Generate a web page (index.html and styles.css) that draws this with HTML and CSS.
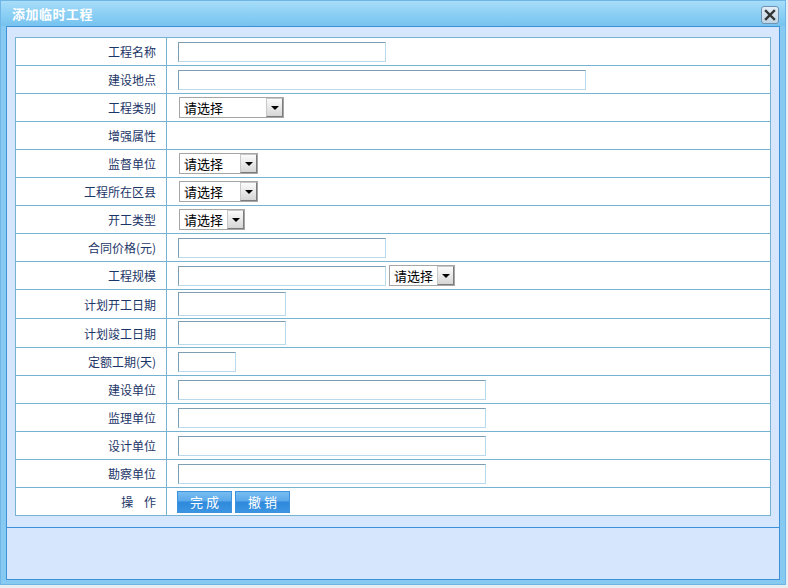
FILE: index.html
```html
<!DOCTYPE html>
<html lang="zh-CN">
<head>
  <meta charset="UTF-8">
  <title>添加临时工程</title>
  <link rel="stylesheet" href="styles.css">
</head>
<body>
  <div class="dialog">
    <div class="titlebar">
      <span class="title">添加临时工程</span>
      <a class="close" href="#" title="关闭">
        <svg width="12" height="12" viewBox="0 0 12 12"><path d="M2 2 L10 10 M10 2 L2 10" stroke="#333" stroke-width="2.4" stroke-linecap="square"/></svg>
      </a>
    </div>
    <div class="dialog-body">
      <div class="panel">
        <table class="form">
          <tr>
            <td class="label">工程名称</td>
            <td><input class="txt w208" type="text"></td>
          </tr>
          <tr>
            <td class="label">建设地点</td>
            <td><input class="txt w408" type="text"></td>
          </tr>
          <tr>
            <td class="label">工程类别</td>
            <td><span class="sel w105"><select><option>请选择</option></select><i class="arrow"></i></span></td>
          </tr>
          <tr>
            <td class="label">增强属性</td>
            <td></td>
          </tr>
          <tr>
            <td class="label">监督单位</td>
            <td><span class="sel w79"><select><option>请选择</option></select><i class="arrow"></i></span></td>
          </tr>
          <tr>
            <td class="label">工程所在区县</td>
            <td><span class="sel w79"><select><option>请选择</option></select><i class="arrow"></i></span></td>
          </tr>
          <tr>
            <td class="label">开工类型</td>
            <td><span class="sel w66"><select><option>请选择</option></select><i class="arrow"></i></span></td>
          </tr>
          <tr>
            <td class="label">合同价格(元)</td>
            <td><input class="txt w208" type="text"></td>
          </tr>
          <tr>
            <td class="label">工程规模</td>
            <td><input class="txt w208" type="text"><span class="sel w66 gap"><select><option>请选择</option></select><i class="arrow"></i></span></td>
          </tr>
          <tr class="date-row">
            <td class="label">计划开工日期</td>
            <td><input class="txt date w108" type="text"></td>
          </tr>
          <tr class="date-row">
            <td class="label">计划竣工日期</td>
            <td><input class="txt date w108" type="text"></td>
          </tr>
          <tr>
            <td class="label">定额工期(天)</td>
            <td><input class="txt w58" type="text"></td>
          </tr>
          <tr>
            <td class="label">建设单位</td>
            <td><input class="txt w308" type="text"></td>
          </tr>
          <tr>
            <td class="label">监理单位</td>
            <td><input class="txt w308" type="text"></td>
          </tr>
          <tr>
            <td class="label">设计单位</td>
            <td><input class="txt w308" type="text"></td>
          </tr>
          <tr>
            <td class="label">勘察单位</td>
            <td><input class="txt w308" type="text"></td>
          </tr>
          <tr>
            <td class="label">操&nbsp;&nbsp;&nbsp;&nbsp;作</td>
            <td class="ops"><button class="btn">完成</button><button class="btn">撤销</button></td>
          </tr>
        </table>
      </div>
      <div class="footer"></div>
    </div>
  </div>
</body>
</html>
```

FILE: styles.css
```css
html, body {
  margin: 0;
  padding: 0;
}

body {
  width: 788px;
  height: 588px;
  background: #e9eef3;
  font-family: "Liberation Sans", "Noto Sans CJK SC", sans-serif;
  font-size: 12px;
  overflow: hidden;
}

.dialog {
  box-sizing: border-box;
  width: 786px;
  height: 585px;
  display: flex;
  flex-direction: column;
  border: 1px solid #6fb6e6;
  background: #86c9f1;
  padding: 0 5px 4px 5px;
}

.titlebar {
  height: 25px;
  margin: 0 -5px;
  padding: 0 6px 0 11px;
  display: flex;
  align-items: center;
  justify-content: space-between;
  background: linear-gradient(#a7ddf9, #8fd1f5 45%, #76c3ef);
}

.titlebar .title {
  color: #fff;
  font-family: "Noto Sans CJK SC", sans-serif;
  font-weight: bold;
  font-size: 13px;
  letter-spacing: 0.5px;
}

.close {
  box-sizing: border-box;
  width: 18px;
  height: 18px;
  margin-top: 3px;
  display: flex;
  align-items: center;
  justify-content: center;
  border: 1px solid #6f93b3;
  border-radius: 3px;
  background: linear-gradient(#e4eef7, #bfd3e4);
}

.dialog-body {
  flex: 1;
  display: flex;
  flex-direction: column;
  border: 1px solid #3d91d9;
  background: #d6e6fc;
}

.panel {
  padding: 10px 8px 11px 8px;
  border-bottom: 1px solid #3d91d9;
}

.footer {
  flex: 1;
}

.form {
  width: 100%;
  border-collapse: collapse;
  background: #fff;
}

.form td {
  border: 1px solid #76b3d3;
  height: 27px;
  padding: 0 0 0 11px;
  vertical-align: middle;
  white-space: nowrap;
}

.form td.label {
  width: 140px;
  padding: 0 10px 0 0;
  text-align: right;
  color: #1d3668;
  font-family: "Noto Sans CJK SC", sans-serif;
  font-size: 12px;
}

.form .date-row td {
  height: 28px;
}

.txt {
  box-sizing: border-box;
  height: 20px;
  margin: 0;
  padding: 0 3px;
  vertical-align: middle;
  border: 1px solid;
  border-color: #7c9db2 #b9d9ed #b9d9ed #7c9db2;
  background: #fff;
  outline: none;
  font-size: 12px;
}

.txt.date {
  height: 24px;
}

.w58 { width: 58px; }
.w108 { width: 108px; }
.w208 { width: 208px; }
.w308 { width: 308px; }
.w408 { width: 408px; }

.sel {
  position: relative;
  display: inline-block;
  vertical-align: middle;
  margin-left: 1px;
}

.sel.gap {
  margin-left: 3px;
}

.sel select {
  box-sizing: border-box;
  width: 100%;
  height: 21px;
  margin: 0;
  padding: 0 0 0 4px;
  -webkit-appearance: none;
  appearance: none;
  border: 1px solid #a6a6a6;
  border-radius: 0;
  background: #fff;
  color: #000;
  font-family: "Noto Sans CJK SC", sans-serif;
  font-size: 13px;
  outline: none;
  display: block;
}

.sel .arrow {
  position: absolute;
  right: 1px;
  top: 1px;
  box-sizing: border-box;
  width: 17px;
  height: 19px;
  border: 1px solid;
  border-color: #c8c8c8 #7b7b7b #7b7b7b #c8c8c8;
  background: linear-gradient(#fbfbfb, #d6d6d6);
  pointer-events: none;
}

.sel .arrow::after {
  content: "";
  position: absolute;
  left: 4px;
  top: 7px;
  border-left: 4px solid transparent;
  border-right: 4px solid transparent;
  border-top: 4px solid #000;
}

.w105 { width: 105px; }
.w79 { width: 79px; }
.w66 { width: 66px; }

.ops {
  font-size: 0;
}

.btn {
  box-sizing: border-box;
  width: 55px;
  height: 22px;
  margin: 0 3px 0 0;
  padding: 0 0 0 3px;
  vertical-align: middle;
  border: 1px solid #3e92dc;
  background: linear-gradient(#78bdf0, #5aa8ea 45%, #2f89dc 50%, #3b95e2);
  color: #fff;
  font-family: "Noto Sans CJK SC", sans-serif;
  font-size: 13px;
  letter-spacing: 3px;
  cursor: pointer;
}

.ops .btn:first-child {
  margin-left: -1px;
}
```
